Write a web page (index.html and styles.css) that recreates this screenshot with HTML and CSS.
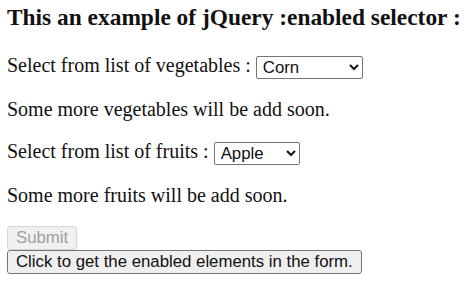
FILE: index.html
```html
<!DOCTYPE html>
<html lang="en">
<head>
    <meta charset="UTF-8">
    <title>jQuery :enabled selector</title>
    <link rel="stylesheet" href="styles.css">
</head>
<body>
    <h3 class="title">This an example of jQuery :enabled selector :</h3>
    <form id="myform">
        <p>Select from list of vegetables :
            <select class="veg" name="vegetables">
                <option>Corn</option>
                <option>Potato</option>
                <option>Cabbage</option>
            </select>
        </p>
        <p>Some more vegetables will be add soon.</p>
        <p>Select from list of fruits :
            <select class="fruit" name="fruits">
                <option>Apple</option>
                <option>Mango</option>
                <option>Banana</option>
            </select>
        </p>
        <p>Some more fruits will be add soon.</p>
        <input type="submit" class="btn" value="Submit" disabled>
    </form>
    <button class="btn" id="check">Click to get the enabled elements in the form.</button>
</body>
</html>
```
FILE: styles.css
```css
body {
    font-family: "Liberation Serif", "Times New Roman", serif;
    font-size: 20px;
    color: #111;
    margin: 4px 7px;
    background-color: #fff;
}
.title {
    font-size: 23.4px;
    margin: 0 0 23px 0;
}
p {
    margin: 19px 0;
}
select {
    font-family: "Liberation Sans", Arial, sans-serif;
    font-size: 16.8px;
    color: #111;
    height: 23px;
    border: 1px solid #767676;
    border-radius: 2px;
    background-color: #fff;
    padding: 0 2px;
    vertical-align: middle;
}
.veg {
    width: 107px;
}
.fruit {
    width: 86px;
}
.btn {
    display: block;
    font-family: "Liberation Sans", Arial, sans-serif;
    font-size: 16.8px;
    color: #111;
    background-color: #efefef;
    border: 1px solid #767676;
    border-radius: 3px;
    padding: 0 8px;
    height: 24px;
}
.btn:disabled {
    color: #a0a0a0;
    border-color: #d6d6d6;
    background-color: #f0f0f0;
}
```
